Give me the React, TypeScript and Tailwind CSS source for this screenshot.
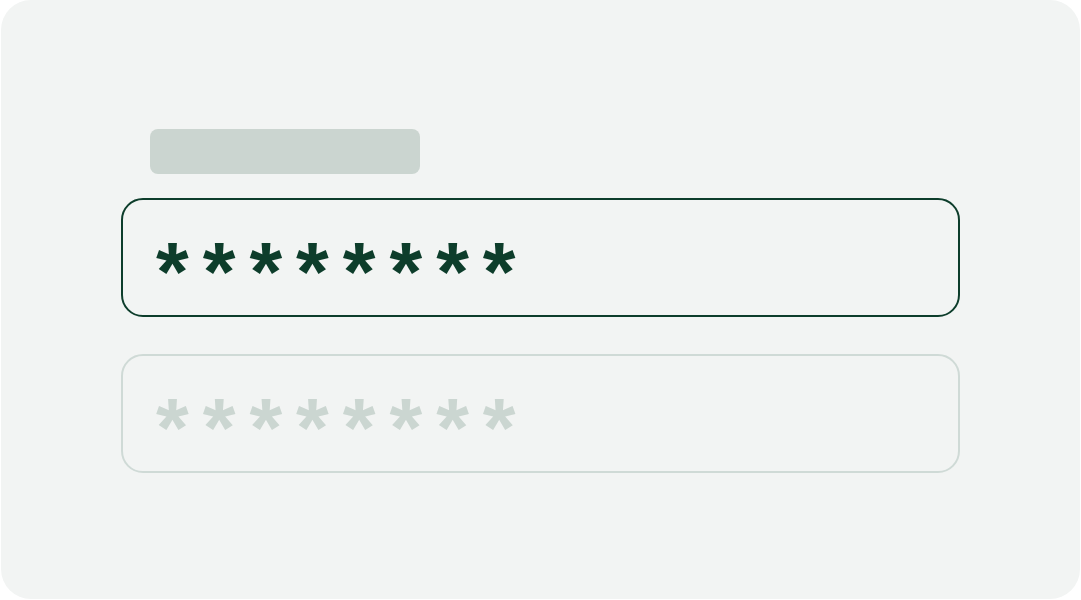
export default function App() {
  const mask = '********';

  return (
    <div className="h-[600px] w-[1081px] bg-white">
      <div className="ml-px flex h-[599px] w-[1079px] flex-col items-center justify-center rounded-[30px] bg-[#f2f4f3]">
        <div className="mt-[3px] flex w-[839px] flex-col">
          {/* label placeholder */}
          <div className="ml-[29px] h-[45px] w-[270px] rounded-[8px] bg-[#cbd5d0]" />

          {/* active field */}
          <div className="mt-[24px] flex h-[119px] items-center rounded-[22px] border-2 border-[#0d3d2b] pl-[33px]">
            <span
              className="translate-y-[14px] text-[84px] font-bold leading-none tracking-[14px] text-[#0d3d2b]"
              style={{ fontFamily: '"Liberation Sans", Arial, sans-serif' }}
            >
              {mask}
            </span>
          </div>

          {/* inactive field */}
          <div className="mt-[37px] flex h-[119px] items-center rounded-[22px] border-2 border-[#cfdad6] pl-[33px]">
            <span
              className="translate-y-[14px] text-[84px] font-bold leading-none tracking-[14px] text-[#cbd6d1]"
              style={{ fontFamily: '"Liberation Sans", Arial, sans-serif' }}
            >
              {mask}
            </span>
          </div>
        </div>
      </div>
    </div>
  );
}
